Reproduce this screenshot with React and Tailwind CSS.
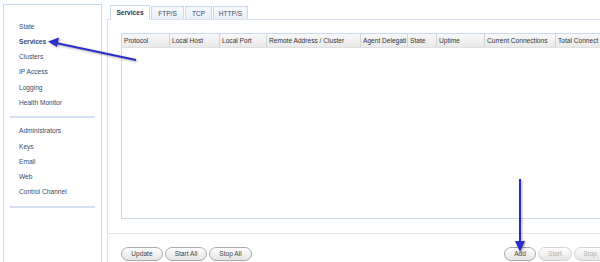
import React from "react";

const font = { fontFamily: '"Liberation Sans", Arial, sans-serif' };

function NavItem({ children, bold }) {
  return (
    <div className={`h-[15.3px] leading-[15.3px] pl-[15px] text-[6.6px] text-[#3b4a68] ${bold ? "font-bold text-[#1f2d4a]" : ""}`}>
      {children}
    </div>
  );
}

function Btn({ children, w, disabled }) {
  return (
    <div
      className={`h-[14px] shrink-0 rounded-full border flex items-center justify-center text-[6.6px] bg-gradient-to-b from-white to-[#e4e4e4] ${
        disabled ? "border-[#d6d6d6] text-[#b0b0b0]" : "border-[#a9a9a9] text-[#444]"
      } ${w}`}
    >
      {children}
    </div>
  );
}

const cols = [
  ["Protocol", "w-[47px]"],
  ["Local Host", "w-[50px]"],
  ["Local Port", "w-[47px]"],
  ["Remote Address / Cluster", "w-[94px]"],
  ["Agent Delegati", "w-[47px]"],
  ["State", "w-[29px]"],
  ["Uptime", "w-[48px]"],
  ["Current Connections", "w-[71px]"],
  ["Total Connect", "w-[50px]"],
];

export default function App() {
  return (
    <div className="relative w-[600px] h-[262px] bg-white overflow-hidden flex" style={font}>
      {/* Sidebar */}
      <div className="shrink-0 ml-[3px] mt-[4px] w-[99px] h-[270px] border-l border-t border-r border-[#c9d9ee] flex flex-col pt-[13.5px]">
        <NavItem>State</NavItem>
        <NavItem bold>Services</NavItem>
        <NavItem>Clusters</NavItem>
        <NavItem>IP Access</NavItem>
        <NavItem>Logging</NavItem>
        <NavItem>Health Monitor</NavItem>
        <div className="mx-[6px] mt-[6px] mb-[5px] h-[2px] bg-[#d3e1f2]" />
        <NavItem>Administrators</NavItem>
        <NavItem>Keys</NavItem>
        <NavItem>Email</NavItem>
        <NavItem>Web</NavItem>
        <NavItem>Control Channel</NavItem>
        <div className="mx-[6px] mt-[6px] h-[2px] bg-[#d3e1f2]" />
      </div>

      {/* Main */}
      <div className="ml-[5px] min-w-0 flex-1 flex flex-col pt-[5px]">
        <div className="flex items-end pl-[3px] gap-[1px] h-[15px]">
          <div className="relative z-10 w-[40px] h-[15px] border border-b-0 border-[#c9d9ee] bg-white flex items-center justify-center text-[6.6px] font-bold text-[#2a3550]">
            Services
          </div>
          <div className="w-[33px] h-[14px] border border-b-0 border-[#c9d9ee] bg-gradient-to-b from-[#f7f9fc] to-[#e9eff8] flex items-center justify-center text-[6.6px] text-[#3b4a68]">
            FTP/S
          </div>
          <div className="w-[27px] h-[14px] border border-b-0 border-[#c9d9ee] bg-gradient-to-b from-[#f7f9fc] to-[#e9eff8] flex items-center justify-center text-[6.6px] text-[#3b4a68]">
            TCP
          </div>
          <div className="w-[35px] h-[14px] border border-b-0 border-[#c9d9ee] bg-gradient-to-b from-[#f7f9fc] to-[#e9eff8] flex items-center justify-center text-[6.6px] text-[#3b4a68]">
            HTTP/S
          </div>
        </div>
        <div className="-mt-px flex-1 border-l border-t border-[#d6e2f1] flex flex-col">
          <div className="ml-[13px] mt-[13px] h-[186px] border-l border-t border-b border-[#c9d9ee] overflow-hidden">
            <div className="flex h-[14px] bg-gradient-to-b from-[#f8f8f8] to-[#e9e9e9] border-b border-[#e0e0e0]">
              {cols.map(([t, w], i) => (
                <div
                  key={t}
                  className={`${w} shrink-0 overflow-hidden whitespace-nowrap pl-[2px] text-[6.6px] leading-[14px] text-[#333] ${
                    i > 0 ? "border-l border-[#d4d4d4]" : ""
                  }`}
                >
                  {t}
                </div>
              ))}
            </div>
          </div>
          <div className="mt-[14px] h-px bg-[#e6e6e6]" />
          <div className="mt-[13px] flex items-center pl-[13px]">
            <div className="flex gap-[2px]">
              <Btn w="w-[42px]">Update</Btn>
              <Btn w="w-[42px]">Start All</Btn>
              <Btn w="w-[43px]">Stop All</Btn>
            </div>
            <div className="ml-auto flex gap-[2px] -mr-[6px]">
              <Btn w="w-[32px]">Add</Btn>
              <Btn w="w-[34px]" disabled>Start</Btn>
              <Btn w="w-[32px]" disabled>Stop</Btn>
            </div>
          </div>
        </div>
      </div>

      {/* Annotation arrows */}
      <svg className="absolute left-0 top-0 pointer-events-none" width="600" height="262" viewBox="0 0 600 262">
        <defs>
          <filter id="sh" x="-20%" y="-20%" width="140%" height="140%">
            <feDropShadow dx="1" dy="1" stdDeviation="0.8" floodColor="#000" floodOpacity="0.35" />
          </filter>
        </defs>
        <g filter="url(#sh)" stroke="#2b2fc4" fill="#2b2fc4">
          <line x1="136" y1="60" x2="56" y2="43" strokeWidth="2" />
          <polygon points="48,41.5 59,37.5 57,47" stroke="none" />
          <line x1="520" y1="179" x2="520" y2="243" strokeWidth="2" />
          <polygon points="520,252 515,241 525,241" stroke="none" />
        </g>
      </svg>
    </div>
  );
}
